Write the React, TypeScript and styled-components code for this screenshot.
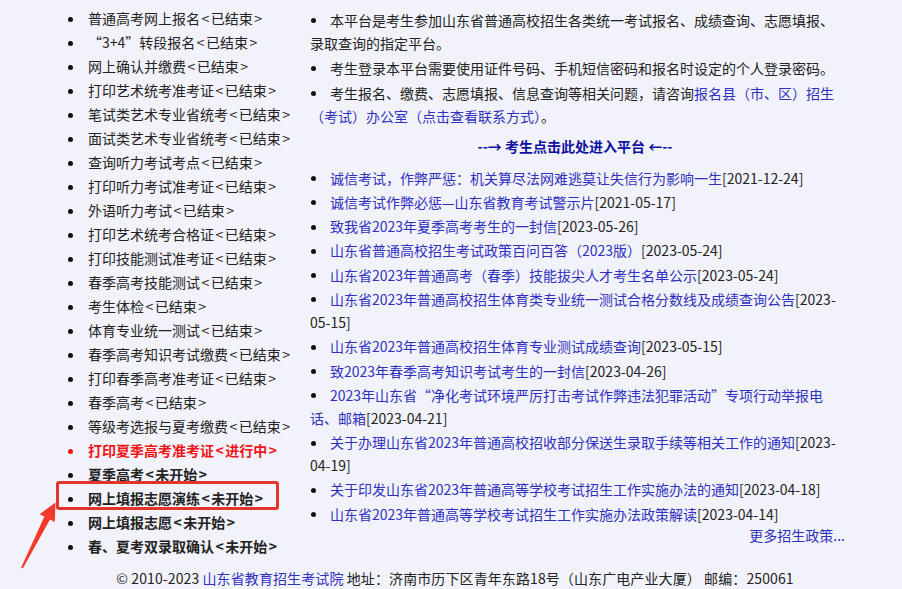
import React from "react";
import styled, { createGlobalStyle, css } from "styled-components";

const GlobalStyle = createGlobalStyle`
  html, body {
    margin: 0;
    padding: 0;
    background: #f2f3fa;
  }
  body {
    font-family: "Noto Sans CJK SC", "Liberation Sans", sans-serif;
    font-size: 14px;
    color: #222;
  }
  a {
    text-decoration: none;
  }
`;

const Page = styled.div`
  position: relative;
  width: 902px;
  height: 589px;
  overflow: hidden;
  display: flex;
  flex-direction: column;
`;

const Main = styled.div`
  display: grid;
  grid-template-columns: 310px 530px;
  align-items: start;
`;

const StepList = styled.ul`
  list-style: none;
  margin: 0;
  padding: 6px 0 0 68px;
  display: flex;
  flex-direction: column;
`;

type Status = "done" | "active" | "pending";

const dot = css`
  content: "";
  display: inline-block;
  width: 5px;
  height: 5px;
  border-radius: 50%;
  vertical-align: 2.5px;
`;

const Step = styled.li<{ $status: Status; $marked?: boolean }>`
  position: relative;
  line-height: 24px;
  white-space: nowrap;
  color: ${(p) => (p.$status === "active" ? "#f01515" : "#222")};
  font-weight: ${(p) => (p.$status === "done" ? 400 : 700)};

  &::before {
    ${dot}
    margin-right: 15px;
    background: ${(p) => (p.$status === "active" ? "#f01515" : "#111")};
  }

  ${(p) =>
    p.$marked &&
    css`
      &::after {
        content: "";
        position: absolute;
        left: -12px;
        top: -5px;
        width: 217px;
        height: 23px;
        border: 3px solid #e3332b;
        border-radius: 3px;
        pointer-events: none;
      }
    `}
`;

const Tag = styled.span`
  &::before {
    content: "<";
    margin: 0 1.5px;
  }
  &::after {
    content: ">";
    margin: 0 1.5px;
  }
`;

const Side = styled.div`
  padding-top: 8.5px;
  display: flex;
  flex-direction: column;
`;

const Notice = styled.p`
  margin: 0 0 2px;
  line-height: 23px;

  &::before {
    ${dot}
    background: #111;
    margin: 0 14px 0 1px;
  }
`;

const Link = styled.a`
  color: #2f2fc0;
`;

const Enter = styled.a`
  margin-top: 5px;
  line-height: 23px;
  text-align: center;
  font-weight: 700;
  color: #1010a0;
`;

const NewsList = styled.ul`
  list-style: none;
  margin: 9px 0 0;
  padding: 0;
  display: flex;
  flex-direction: column;
  gap: 1.3px;
`;

const NewsItem = styled.li`
  line-height: 23px;

  &::before {
    ${dot}
    background: #111;
    margin: 0 14px 0 1px;
  }
`;

const More = styled.a`
  align-self: flex-end;
  line-height: 19px;
  margin: 0 -5px 0 0;
  color: #2f2fc0;
`;

const Footer = styled.div`
  padding: 8px 0 0 8px;
  line-height: 24px;
  text-align: center;
  white-space: nowrap;
  letter-spacing: 0.1px;
`;

const Arrow = styled.svg`
  position: absolute;
  left: 15px;
  top: 495px;
  width: 50px;
  height: 80px;
  pointer-events: none;
`;

const steps: { name: string; state: string; status: Status; marked?: boolean }[] = [
  { name: "普通高考网上报名", state: "已结束", status: "done" },
  { name: "“3+4”转段报名", state: "已结束", status: "done" },
  { name: "网上确认并缴费", state: "已结束", status: "done" },
  { name: "打印艺术统考准考证", state: "已结束", status: "done" },
  { name: "笔试类艺术专业省统考", state: "已结束", status: "done" },
  { name: "面试类艺术专业省统考", state: "已结束", status: "done" },
  { name: "查询听力考试考点", state: "已结束", status: "done" },
  { name: "打印听力考试准考证", state: "已结束", status: "done" },
  { name: "外语听力考试", state: "已结束", status: "done" },
  { name: "打印艺术统考合格证", state: "已结束", status: "done" },
  { name: "打印技能测试准考证", state: "已结束", status: "done" },
  { name: "春季高考技能测试", state: "已结束", status: "done" },
  { name: "考生体检", state: "已结束", status: "done" },
  { name: "体育专业统一测试", state: "已结束", status: "done" },
  { name: "春季高考知识考试缴费", state: "已结束", status: "done" },
  { name: "打印春季高考准考证", state: "已结束", status: "done" },
  { name: "春季高考", state: "已结束", status: "done" },
  { name: "等级考选报与夏考缴费", state: "已结束", status: "done" },
  { name: "打印夏季高考准考证", state: "进行中", status: "active" },
  { name: "夏季高考", state: "未开始", status: "pending" },
  { name: "网上填报志愿演练", state: "未开始", status: "pending", marked: true },
  { name: "网上填报志愿", state: "未开始", status: "pending" },
  { name: "春、夏考双录取确认", state: "未开始", status: "pending" },
];

const news = [
  { title: "诚信考试，作弊严惩：机关算尽法网难逃莫让失信行为影响一生", date: "2021-12-24" },
  { title: "诚信考试作弊必惩—山东省教育考试警示片", date: "2021-05-17" },
  { title: "致我省2023年夏季高考考生的一封信", date: "2023-05-26" },
  { title: "山东省普通高校招生考试政策百问百答（2023版）", date: "2023-05-24" },
  { title: "山东省2023年普通高考（春季）技能拔尖人才考生名单公示", date: "2023-05-24" },
  { title: "山东省2023年普通高校招生体育类专业统一测试合格分数线及成绩查询公告", date: "2023-05-15" },
  { title: "山东省2023年普通高校招生体育专业测试成绩查询", date: "2023-05-15" },
  { title: "致2023年春季高考知识考试考生的一封信", date: "2023-04-26" },
  { title: "2023年山东省“净化考试环境严厉打击考试作弊违法犯罪活动”专项行动举报电话、邮箱", date: "2023-04-21" },
  { title: "关于办理山东省2023年普通高校招收部分保送生录取手续等相关工作的通知", date: "2023-04-19" },
  { title: "关于印发山东省2023年普通高等学校考试招生工作实施办法的通知", date: "2023-04-18" },
  { title: "山东省2023年普通高等学校考试招生工作实施办法政策解读", date: "2023-04-14" },
];

export default function App() {
  return (
    <Page>
      <GlobalStyle />
      <Main>
        <StepList>
          {steps.map((s) => (
            <Step key={s.name} $status={s.status} $marked={s.marked}>
              {s.name}
              <Tag>{s.state}</Tag>
            </Step>
          ))}
        </StepList>
        <Side>
          <Notice>
            本平台是考生参加山东省普通高校招生各类统一考试报名、成绩查询、志愿填报、录取查询的指定平台。
          </Notice>
          <Notice>考生登录本平台需要使用证件号码、手机短信密码和报名时设定的个人登录密码。</Notice>
          <Notice>
            考生报名、缴费、志愿填报、信息查询等相关问题，请咨询
            <Link href="#">报名县（市、区）招生（考试）办公室（点击查看联系方式）</Link>。
          </Notice>
          <Enter href="#">--→ 考生点击此处进入平台 ←--</Enter>
          <NewsList>
            {news.map((n) => (
              <NewsItem key={n.title}>
                <Link href="#">{n.title}</Link>[{n.date}]
              </NewsItem>
            ))}
          </NewsList>
          <More href="#">更多招生政策...</More>
        </Side>
      </Main>
      <Footer>
        © 2010-2023 <Link href="#">山东省教育招生考试院</Link> 地址：济南市历下区青年东路18号（山东广电产业大厦） 邮编：250061
      </Footer>
      <Arrow viewBox="15 495 50 80">
        <polygon
          points="21.2,567.6 44.4,516.6 39.6,514.2 55.5,502.5 54.8,522 50,519.4 22.8,568.4"
          fill="#f23a2c"
        />
      </Arrow>
    </Page>
  );
}
